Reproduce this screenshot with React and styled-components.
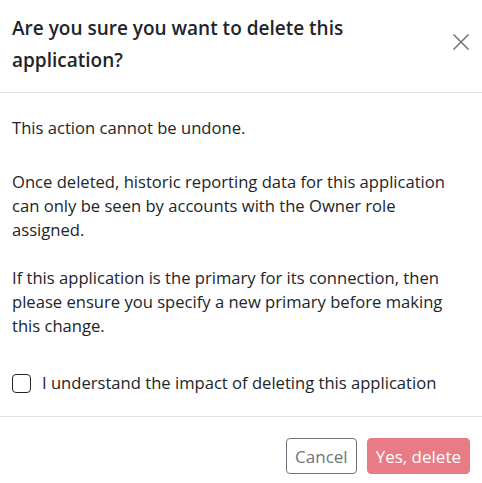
import React, { useState } from "react";
import styled, { createGlobalStyle } from "styled-components";

const GlobalStyle = createGlobalStyle`
  html, body {
    margin: 0;
    padding: 0;
    background: #ffffff;
  }
  body {
    font-family: "Open Sans", "Noto Sans", sans-serif;
    color: #212529;
    -webkit-font-smoothing: antialiased;
  }
  * {
    box-sizing: border-box;
  }
`;

const App = () => {
  const [understood, setUnderstood] = useState(false);

  return (
    <>
      <GlobalStyle />
      <Dialog role="dialog" aria-labelledby="delete-title">
        <Header>
          <Title id="delete-title">
            Are you sure you want to delete this application?
          </Title>
          <CloseButton aria-label="Close">
            <svg width="16" height="16" viewBox="0 0 16 16" fill="none">
              <path
                d="M1 1L15 15M15 1L1 15"
                stroke="#6c757d"
                strokeWidth="1.5"
                strokeLinecap="square"
              />
            </svg>
          </CloseButton>
        </Header>

        <Body>
          <Paragraph spacing={30}>This action cannot be undone.</Paragraph>
          <Paragraph spacing={24}>
            Once deleted, historic reporting data for this application can
            only be seen by accounts with the Owner role assigned.
          </Paragraph>
          <Paragraph spacing={33}>
            If this application is the primary for its connection, then please
            ensure you specify a new primary before making this change.
          </Paragraph>
          <CheckRow>
            <CheckInput
              type="checkbox"
              checked={understood}
              onChange={(e) => setUnderstood(e.target.checked)}
            />
            I understand the impact of deleting this application
          </CheckRow>
        </Body>

        <Footer>
          <Button variant="outline">Cancel</Button>
          <Button variant="danger" disabled={!understood}>
            Yes, delete
          </Button>
        </Footer>
      </Dialog>
    </>
  );
};

export default App;

const Dialog = styled.div`
  width: 482px;
  background: #ffffff;
`;

const Header = styled.div`
  display: flex;
  align-items: flex-start;
  justify-content: space-between;
  gap: 24px;
  padding: 12px 12px 16px 12px;
  border-bottom: 1px solid #dee2e6;
`;

const Title = styled.h5`
  margin: 0;
  max-width: 350px;
  font-size: 19px;
  font-weight: 600;
  line-height: 32px;
  color: #212529;
`;

const CloseButton = styled.button`
  display: flex;
  align-items: center;
  justify-content: center;
  width: 24px;
  height: 24px;
  margin-top: 18px;
  margin-right: -3px;
  padding: 0;
  border: none;
  background: transparent;
  cursor: pointer;
`;

const Body = styled.div`
  padding: 23px 12px 21px 12px;
  font-size: 16.6px;
  line-height: 24px;
`;

const Paragraph = styled.p`
  max-width: 448px;
  margin: 0 0 ${(props) => props.spacing}px 0;
`;

const CheckRow = styled.label`
  display: flex;
  align-items: center;
  gap: 11px;
  cursor: pointer;
`;

const CheckInput = styled.input`
  appearance: none;
  flex: none;
  width: 19px;
  height: 19px;
  margin: 0;
  border: 1px solid #212529;
  border-radius: 4px;
  background: #ffffff;
  cursor: pointer;

  &:checked {
    background: #0d6efd;
    border-color: #0d6efd;
  }
`;

const Footer = styled.div`
  display: flex;
  justify-content: flex-end;
  gap: 10px;
  padding: 21px 12px 12px 12px;
  border-top: 1px solid #dee2e6;
`;

const Button = styled.button`
  height: 36px;
  padding: 0 8px;
  border-radius: 4px;
  font-family: inherit;
  font-size: 17px;
  cursor: pointer;
  border: 1px solid
    ${(props) => (props.variant === "danger" ? "#dc3545" : "#6c757d")};
  background: ${(props) =>
    props.variant === "danger" ? "#dc3545" : "transparent"};
  color: ${(props) => (props.variant === "danger" ? "#ffffff" : "#6c757d")};

  &:disabled {
    opacity: 0.65;
    cursor: default;
  }
`;
